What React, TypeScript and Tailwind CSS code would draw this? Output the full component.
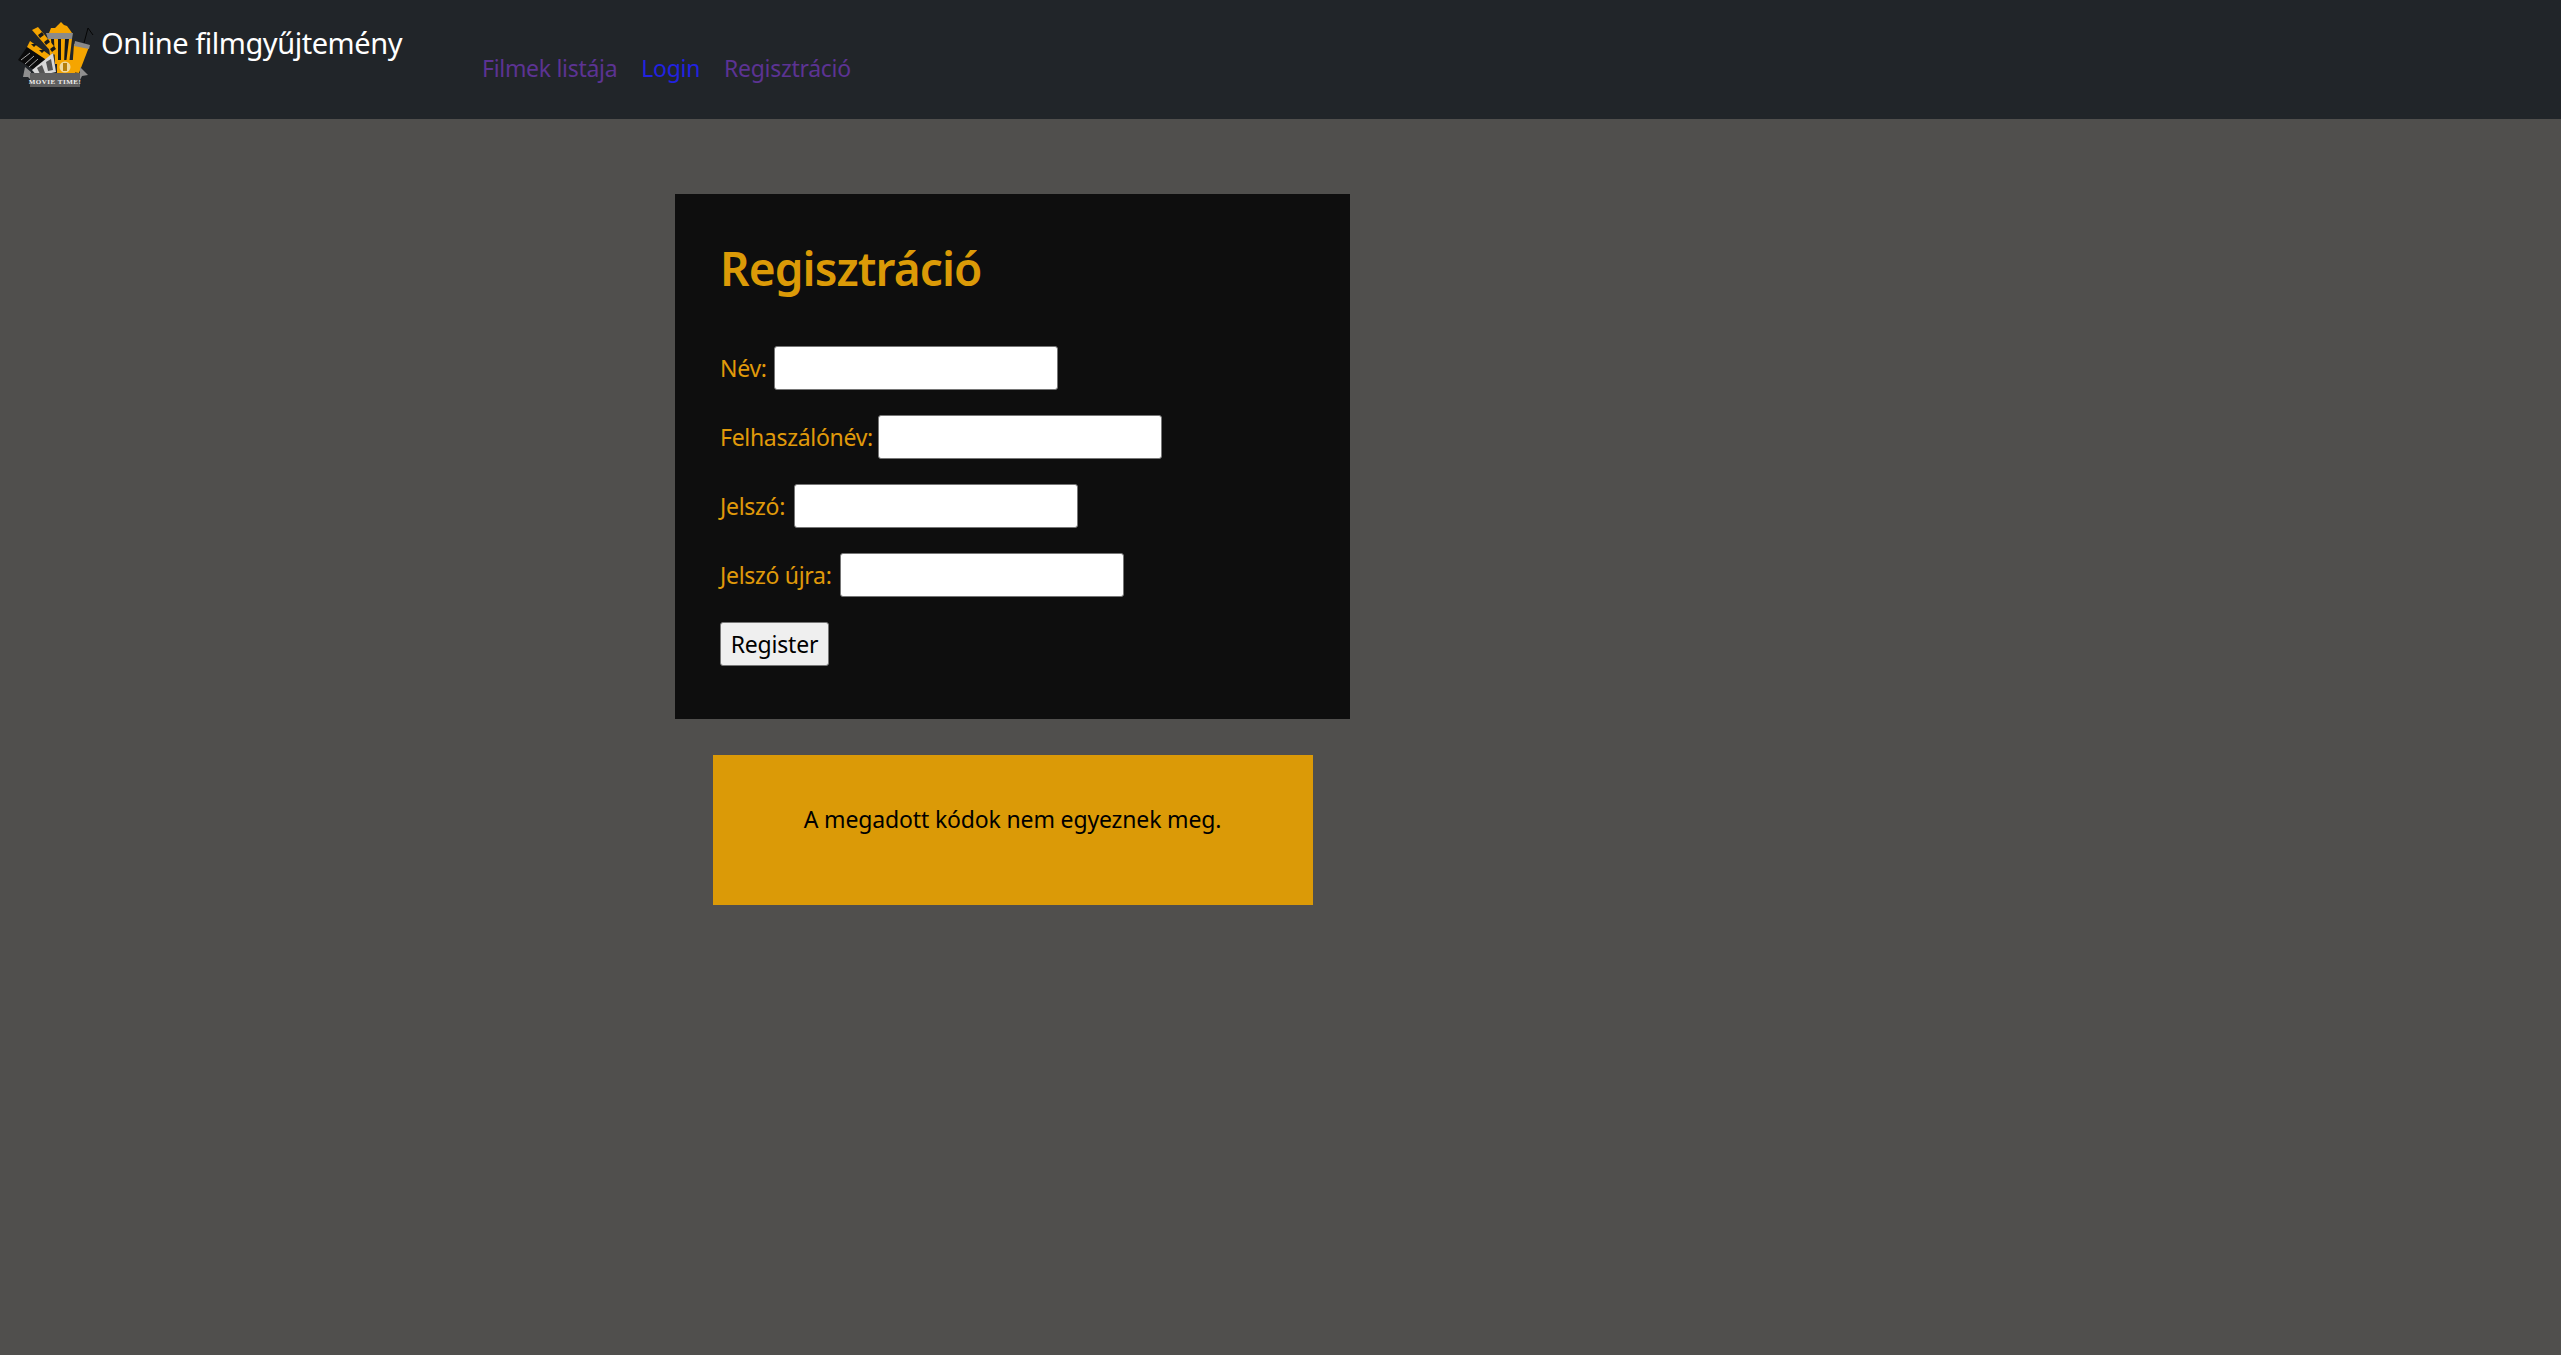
const fontStack = { fontFamily: '"Noto Sans", sans-serif' }

function MovieLogo() {
  return (
    <svg viewBox="0 0 77 67" className="w-[77px] h-[67px] shrink-0">
      {/* straw + cup */}
      <path d="M67 23 L71 8 L76 15" fill="none" stroke="#050505" strokeWidth="1" />
      <path d="M57 24 L72 27 L62 53 L55 52 Z" fill="#f5a500" />
      <path d="M58 21 L73 25 L72 29 L57 26 Z" fill="#8a8a8a" />
      {/* popcorn */}
      <path d="M32 13 L34 8 L38 8 L41 5 L44 2 L47 5 L50 6 L53 10 L55 13 Z" fill="#f5a500" />
      <path d="M29 13 L56 13 L55 19 L31 19 Z" fill="#8a8a8a" />
      <path d="M31 19 L55 19 L52 44 L34 44 Z" fill="#f5a500" />
      <path d="M34 19 L37 19 L38 44 L36 44 Z M41 19 L44 19 L44 44 L41 44 Z M48 19 L52 19 L49 44 L47 44 Z" fill="#15181b" />
      {/* clapper stick */}
      <path d="M15 10 L21 7 L41 31 L37 35 Z" fill="#f5a500" />
      <path d="M21 15 L25 12 L27 15 L23 18 Z M27 22 L31 19 L33 22 L29 25 Z M33 29 L37 26 L39 29 L35 32 Z" fill="#15181b" />
      {/* clapperboard */}
      <path d="M1 40 L10 27 L33 42 L24 54 Z" fill="#0b0b0b" />
      <path d="M10 27 L13 21 L34 36 L31 41 Z" fill="#f5a500" />
      <path d="M14 24 L17 27 L20 24 Z M22 30 L25 33 L28 30 Z" fill="#15181b" />
      <path d="M4 40 L13 33 M8 44 L17 36 M12 47 L21 39" stroke="#cfcfcf" strokeWidth="0.8" />
      {/* tickets */}
      <path d="M15 50 L36 33 L39 52 L20 56 Z" fill="#d8d8d8" />
      <path d="M20 48 L25 45 L28 53 L23 54 Z M29 42 L34 39 L36 50 L31 51 Z" fill="#555" />
      {/* film box */}
      <rect x="40" y="40" width="18" height="14" fill="#f5a500" />
      <circle cx="48" cy="47" r="5.5" fill="#f0d9a0" />
      <rect x="46" y="43" width="4" height="8" fill="#b57f0c" />
      {/* ribbon */}
      <path d="M8 47 L14 52 L14 60 L11 57 L6 57 Z" fill="#8f8f8f" />
      <path d="M63 47 L71 55 L65 56 L63 60 Z" fill="#8f8f8f" />
      <rect x="13" y="53" width="50" height="14" fill="#5f5f5f" />
      <text x="38" y="63.5" textAnchor="middle" fontSize="7" fontWeight="700" fill="#efefef" fontFamily='"Liberation Serif", serif' letterSpacing="0.5">MOVIE TIME!</text>
    </svg>
  )
}

function Field({ label, gap }: { label: string; gap: string }) {
  return (
    <div className="mb-[25px] h-[44px] flex items-center">
      <label className="text-[#e09a0a] text-[23px] tracking-[-0.3px]">{label}</label>
      <input
        type="text"
        className={`${gap} w-[284px] h-[44px] bg-white border border-[#767676] rounded-[3px]`}
      />
    </div>
  )
}

export default function App() {
  return (
    <div className="min-h-[1355px] bg-[#504f4d]" style={fontStack}>
      {/* Navbar */}
      <nav className="h-[119px] bg-[#212529] flex items-start">
        <div className="ml-[17px] mt-[20px] w-[84px]">
          <MovieLogo />
        </div>
        <a className="mt-[20px] text-white text-[29px] leading-[45px] w-[381px] tracking-[-0.45px]">Online filmgyűjtemény</a>
        <ul className="mt-[48px] flex gap-[24px] text-[23px] leading-[40px] tracking-[-0.3px]">
          <li className="text-[#5c3393]">Filmek listája</li>
          <li className="text-[#2222e0]">Login</li>
          <li className="text-[#5c3393]">Regisztráció</li>
        </ul>
      </nav>

      {/* Content */}
      <main className="w-[2025px] flex flex-col items-center pt-[75px]">
        <section className="w-[675px] h-[525px] bg-[#0e0e0e] px-[45px] pt-[45px]">
          <h2 className="text-[#db9a07] text-[46px] leading-[58px] font-semibold tracking-[-0.9px] mb-[49px]">Regisztráció</h2>
          <form>
            <Field label="Név:" gap="ml-[7px]" />
            <Field label="Felhaszálónév:" gap="ml-[5px]" />
            <Field label="Jelszó:" gap="ml-[9px]" />
            <Field label="Jelszó újra:" gap="ml-[8px]" />
            <button type="button" className="w-[109px] h-[44px] bg-[#efefef] border border-[#767676] rounded-[3px] text-black text-[23px] tracking-[-0.2px]">
              Register
            </button>
          </form>
        </section>
        <div className="mt-[36px] w-[600px] h-[150px] bg-[#db9a07] pt-[47px] text-center text-[23px] tracking-[-0.15px] text-black">
          A megadott kódok nem egyeznek meg.
        </div>
      </main>
    </div>
  )
}
